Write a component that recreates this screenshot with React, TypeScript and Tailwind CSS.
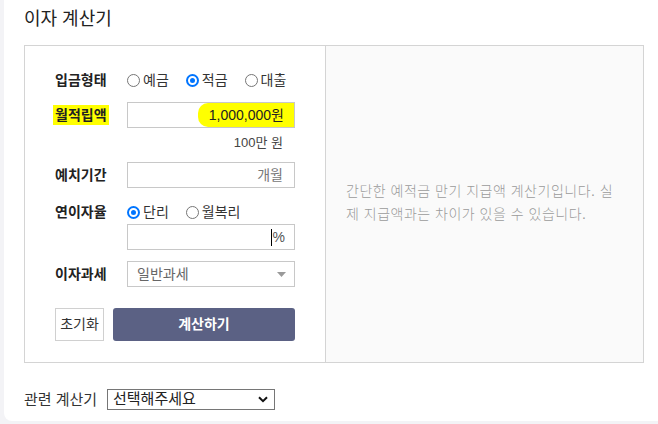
import React from 'react';

const font = { fontFamily: '"Liberation Sans", "Noto Sans CJK KR", sans-serif' };

function Radio({ label, checked = false }: { label: string; checked?: boolean }) {
  return (
    <label className="flex items-center gap-[3px] text-[14px] leading-[20px] text-[#333]">
      {checked ? (
        <span className="flex h-[13px] w-[13px] items-center justify-center rounded-full bg-[#0075ff]">
          <span className="h-[9px] w-[9px] rounded-full border-[2px] border-white bg-[#0075ff]" />
        </span>
      ) : (
        <span className="h-[13px] w-[13px] rounded-full border border-[#767676] bg-white" />
      )}
      {label}
    </label>
  );
}

function Row({ label, children, className = '' }: { label: React.ReactNode; children: React.ReactNode; className?: string }) {
  return (
    <div className={`flex items-center ${className}`}>
      <div className="w-[72px] shrink-0 text-[14px] font-bold leading-[20px] text-[#222]">{label}</div>
      {children}
    </div>
  );
}

export default function App() {
  return (
    <div className="h-[424px] w-[658px] overflow-hidden bg-[#f3f3f6]" style={font}>
      <div className="ml-[4px] h-[421px] w-[670px] rounded-b-[8px] bg-white pl-[20px] pt-[7px]">
        <h1 className="text-[18px] leading-[25px] text-[#222]">이자 계산기</h1>

        <div className="mt-[13px] flex h-[318px] w-[620px] border border-[#d4d4d4]">
          <div className="w-[301px] shrink-0 border-r border-[#d4d4d4] px-[30px] pt-[21px]">
            <Row label="입금형태" className="h-[26px]">
              <div className="flex items-center gap-[17px]">
                <Radio label="예금" />
                <Radio label="적금" checked />
                <Radio label="대출" />
              </div>
            </Row>

            <Row
              className="mt-[9px] h-[26px]"
              label={<span className="-ml-[2px] bg-[#ffff00] px-[2px] py-[2px]">월적립액</span>}
            >
              <div className="flex h-[26px] w-[168px] items-stretch justify-end border border-[#c8c8c8]">
                <span className="flex items-center rounded-l-[10px] bg-[#ffff00] pl-[11px] pr-[10px] text-[14px] text-[#222]">
                  1,000,000원
                </span>
              </div>
            </Row>

            <div className="mt-[4px] h-[22px] pr-[12px] text-right text-[13px] leading-[22px] text-[#444]">100만 원</div>

            <Row label="예치기간" className="mt-[8px] h-[26px]">
              <div className="flex h-[26px] w-[168px] items-center justify-end border border-[#c8c8c8] pr-[11px] text-[14px] text-[#777]">
                개월
              </div>
            </Row>

            <Row label="연이자율" className="mt-[14px] h-[20px]">
              <div className="flex items-center gap-[17px]">
                <Radio label="단리" checked />
                <Radio label="월복리" />
              </div>
            </Row>

            <div className="mt-[2px] ml-[72px] flex h-[26px] w-[168px] items-center justify-end border border-[#c8c8c8] pr-[9px] text-[14px] text-[#555]">
              <span className="mr-[1px] h-[17px] w-[1px] bg-black" />%
            </div>

            <Row label="이자과세" className="mt-[11px] h-[26px]">
              <div className="flex h-[26px] w-[168px] items-center justify-between border border-[#c8c8c8] pl-[9px] pr-[8px] text-[14px] text-[#666]">
                일반과세
                <svg width="9" height="5" viewBox="0 0 9 5">
                  <path d="M0 0h9L4.5 5z" fill="#9a9a9a" />
                </svg>
              </div>
            </Row>

            <div className="mt-[21px] flex gap-[9px]">
              <button className="h-[33px] w-[49px] border border-[#d0d0d0] bg-white text-[14px] text-[#333]">초기화</button>
              <button className="h-[33px] w-[182px] rounded-[3px] bg-[#5b6184] text-[14px] font-bold text-white">계산하기</button>
            </div>
          </div>

          <div className="flex flex-1 items-center bg-[#fafafa] px-[20px] pb-[3px]">
            <p className="w-[276px] break-all text-[14px] font-light leading-[23px] tracking-[0.5px] text-[#9a9a9a]">
              간단한 예적금 만기 지급액 계산기입니다. 실제 지급액과는 차이가 있을 수 있습니다.
            </p>
          </div>
        </div>

        <div className="mt-[26px] flex items-center">
          <span className="w-[83px] text-[15px] leading-[20px] text-[#333]">관련 계산기</span>
          <div className="flex h-[21px] w-[168px] items-center justify-between border border-[#767676] pl-[5px] pr-[6px] text-[15px] text-[#222]">
            선택해주세요
            <svg width="10" height="7" viewBox="0 0 10 7">
              <path d="M1 1.2l4 4 4-4" fill="none" stroke="#111" strokeWidth="2" />
            </svg>
          </div>
        </div>
      </div>
    </div>
  );
}
